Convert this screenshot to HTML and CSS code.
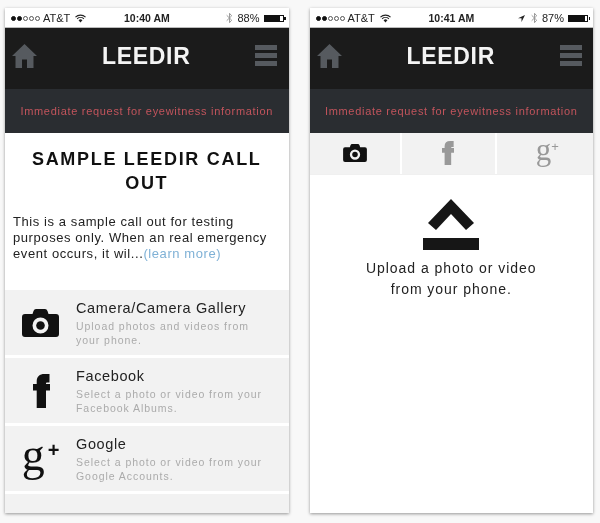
FILE: index.html
```html
<!DOCTYPE html>
<html lang="en">
<head>
    <meta charset="UTF-8">
    <meta name="viewport" content="width=device-width, initial-scale=1.0">
    <title>Leedir</title>
    <link rel="stylesheet" href="styles.css">
</head>
<body>
    <svg class="defs" width="0" height="0">
        <symbol id="wifi" viewBox="0 0 12 9">
            <path d="M0.5 3 A8 8 0 0 1 11.5 3 M2.3 4.9 A5.4 5.4 0 0 1 9.7 4.9" fill="none" stroke="currentColor" stroke-width="1.2"/>
            <path d="M3.9 6.4 A3 3 0 0 1 8.1 6.4 L6 8.8 Z" fill="currentColor"/>
        </symbol>
        <symbol id="bt" viewBox="0 0 6 11">
            <path d="M0.4 3 L5 7.5 L3 9.8 V1.2 L5 3.5 L0.4 8" fill="none" stroke="currentColor" stroke-width="0.9"/>
        </symbol>
        <symbol id="home" viewBox="0 0 25 24">
            <path d="M12.5 0 L25 12 H21.5 V24 H15 V15.5 H10 V24 H3.5 V12 H0 Z" fill="currentColor"/>
        </symbol>
        <symbol id="camera" viewBox="0 0 37 28">
            <path fill-rule="evenodd" fill="currentColor" d="M3 5 H10.5 L11.5 2 Q12.2 0 14 0 H23 Q24.8 0 25.5 2 L26.5 5 H34 Q37 5 37 8 V25 Q37 28 34 28 H3 Q0 28 0 25 V8 Q0 5 3 5 Z M18.5 8.5 A8 8 0 1 0 18.5 24.5 A8 8 0 1 0 18.5 8.5 Z"/>
            <circle cx="18.5" cy="16.5" r="4.3" fill="currentColor"/>
        </symbol>
        <symbol id="fb" viewBox="0 0 17 34">
            <path d="M3.7 34 V16.5 H0 V10 H3.7 V7.5 C3.7 2.5 6.5 0 11.5 0 H16.5 V8.5 H14.5 C13.3 8.5 13 9 13 9.5 V10 H17 V16.5 H13 V34 Z" fill="currentColor"/>
        </symbol>
    </svg>

    <div class="phone">
        <div class="status">
            <span class="signal"><i class="on"></i><i class="on"></i><i></i><i></i><i></i></span>
            <span class="carrier">AT&amp;T</span>
            <svg class="wifi"><use href="#wifi"/></svg>
            <span class="clock">10:40 AM</span>
            <span class="status-right">
                <svg class="bt"><use href="#bt"/></svg>
                <span class="pct">88%</span>
                <span class="battery"><b class="w88"></b></span>
            </span>
        </div>
        <div class="navbar">
            <svg class="home"><use href="#home"/></svg>
            <div class="brand">LEEDIR</div>
            <div class="burger"><span></span><span></span><span></span></div>
        </div>
        <div class="banner">Immediate request for eyewitness information</div>
        <div class="callout">
            <h1>SAMPLE LEEDIR CALL OUT</h1>
            <p>This is a sample call out for testing purposes only. When an real emergency event occurs, it wil...<a href="#">(learn more)</a></p>
        </div>
        <ul class="sources">
            <li>
                <div class="src-icon"><svg class="ic-camera"><use href="#camera"/></svg></div>
                <div class="src-text">
                    <h3>Camera/Camera Gallery</h3>
                    <p>Upload photos and videos from your phone.</p>
                </div>
            </li>
            <li>
                <div class="src-icon"><svg class="ic-fb"><use href="#fb"/></svg></div>
                <div class="src-text">
                    <h3>Facebook</h3>
                    <p>Select a photo or video from your Facebook Albums.</p>
                </div>
            </li>
            <li>
                <div class="src-icon"><span class="gplus"><span class="g">g</span><span class="plus">+</span></span></div>
                <div class="src-text">
                    <h3>Google</h3>
                    <p>Select a photo or video from your Google Accounts.</p>
                </div>
            </li>
            <li class="filler"></li>
        </ul>
    </div>

    <div class="phone">
        <div class="status">
            <span class="signal"><i class="on"></i><i class="on"></i><i></i><i></i><i></i></span>
            <span class="carrier">AT&amp;T</span>
            <svg class="wifi"><use href="#wifi"/></svg>
            <span class="clock">10:41 AM</span>
            <span class="status-right">
                <svg class="arrow" viewBox="0 0 8 8"><path d="M8 0 L0 3.6 H4 V8 Z" fill="currentColor"/></svg>
                <svg class="bt"><use href="#bt"/></svg>
                <span class="pct">87%</span>
                <span class="battery"><b class="w87"></b></span>
            </span>
        </div>
        <div class="navbar">
            <svg class="home"><use href="#home"/></svg>
            <div class="brand">LEEDIR</div>
            <div class="burger"><span></span><span></span><span></span></div>
        </div>
        <div class="banner">Immediate request for eyewitness information</div>
        <div class="tabs">
            <div class="tab active"><svg class="tab-camera"><use href="#camera"/></svg></div>
            <div class="tab"><svg class="tab-fb"><use href="#fb"/></svg></div>
            <div class="tab"><span class="gplus small"><span class="g">g</span><span class="plus">+</span></span></div>
        </div>
        <div class="upload">
            <svg class="upload-icon" viewBox="0 0 56 51">
                <polygon points="28,0 51,24 43,31 28,15 13,31 5,24" fill="currentColor"/>
                <rect x="0" y="39" width="56" height="12" fill="currentColor"/>
            </svg>
            <p>Upload a photo or video<br>from your phone.</p>
        </div>
    </div>
</body>
</html>
```

FILE: styles.css
```css
* {
    box-sizing: border-box;
}
html, body {
    height: 100%;
}
body {
    margin: 0;
    padding: 8px 7px 10px 5px;
    display: flex;
    gap: 21px;
    background-color: #f8f8f8;
    font-family: "Liberation Sans", Arial, sans-serif;
    overflow: hidden;
}
.defs {
    display: none;
}
.phone {
    width: 284px;
    height: 505px;
    display: flex;
    flex-direction: column;
    background-color: #fff;
    box-shadow: 0 1px 3px rgba(0, 0, 0, 0.4);
    filter: blur(0.35px);
}

/* status bar */
.status {
    height: 19px;
    display: flex;
    align-items: center;
    padding: 1px 5px 0 6px;
    color: #222;
    font-size: 11px;
    position: relative;
}
.signal {
    display: flex;
    gap: 1px;
    margin-right: 3px;
}
.signal i {
    width: 5px;
    height: 5px;
    border: 0.7px solid #555;
    border-radius: 50%;
}
.signal i.on {
    background-color: #111;
    border-color: #111;
}
.wifi {
    width: 11px;
    height: 9px;
    margin-left: 5px;
}
.clock {
    position: absolute;
    left: 119px;
    font-weight: bold;
    font-size: 10.5px;
}
.status-right {
    margin-left: auto;
    display: flex;
    align-items: center;
}
.arrow {
    width: 7px;
    height: 7px;
    margin-right: 6px;
}
.bt {
    width: 7px;
    height: 12px;
    color: #999;
    margin-right: 4px;
}
.battery {
    width: 20px;
    height: 7px;
    margin-left: 4px;
    border: 1px solid #111;
    position: relative;
}
.battery::after {
    content: "";
    position: absolute;
    right: -3px;
    top: 1px;
    width: 1.5px;
    height: 3px;
    background-color: #111;
}
.battery b {
    display: block;
    height: 100%;
    background-color: #111;
}
.w88 {
    width: 88%;
}
.w87 {
    width: 87%;
}

/* header */
.navbar {
    height: 62px;
    display: flex;
    align-items: center;
    justify-content: space-between;
    padding: 0 11px 6px 7px;
    background-color: #1b1b1b;
    border-top: 1px solid #bbb;
}
.home {
    width: 25px;
    height: 24px;
    color: #565a5f;
}
.brand {
    margin-top: 2px;
    color: #f4f4f4;
    font-size: 23px;
    font-weight: bold;
    letter-spacing: 0.7px;
}
.burger {
    width: 22px;
    display: flex;
    flex-direction: column;
    gap: 3px;
}
.burger span {
    height: 5px;
    background-color: #565a5f;
}
.banner {
    height: 44px;
    display: flex;
    align-items: center;
    justify-content: center;
    background-color: #2a2d31;
    color: #c2545c;
    font-size: 11px;
    letter-spacing: 0.7px;
}

/* left screen */
.callout {
    height: 157px;
    padding: 14px 8px 0;
}
.callout h1 {
    margin: 0 0 19px;
    text-align: center;
    color: #111;
    font-size: 18px;
    line-height: 24px;
    letter-spacing: 1.7px;
}
.callout p {
    margin: 0;
    color: #222;
    font-size: 13px;
    line-height: 16px;
    letter-spacing: 0.58px;
}
.callout a {
    color: #7fb1d6;
    text-decoration: none;
}
.sources {
    list-style: none;
    margin: 0;
    padding: 0;
    flex: 1;
    display: flex;
    flex-direction: column;
    gap: 3px;
}
.sources li {
    height: 65px;
    display: flex;
    background-color: #f2f2f2;
}
.sources li.filler {
    flex: 1;
    height: auto;
}
.src-icon {
    width: 71px;
    flex: none;
    display: flex;
    align-items: center;
    justify-content: center;
    color: #111;
}
.ic-camera {
    width: 37px;
    height: 28px;
}
.ic-fb {
    width: 17px;
    height: 34px;
    margin-left: 1px;
}
.src-text {
    padding-top: 10px;
    max-width: 192px;
}
.src-text h3 {
    margin: 0 0 3px;
    color: #222;
    font-size: 14.5px;
    font-weight: normal;
    line-height: 17px;
    letter-spacing: 0.62px;
}
.src-text p {
    margin: 0;
    color: #ababab;
    font-size: 10.5px;
    line-height: 13.5px;
    letter-spacing: 0.95px;
}
.gplus {
    display: flex;
    align-items: flex-start;
    gap: 3px;
    height: 38px;
    color: #111;
    font-family: "Liberation Serif", serif;
    font-size: 46px;
    line-height: 30px;
}
.plus {
    font-family: "Liberation Sans", sans-serif;
    font-size: 20px;
    font-weight: bold;
    line-height: 20px;
}

/* right screen */
.tabs {
    height: 42px;
    display: grid;
    grid-template-columns: 90px 93px 1fr;
    gap: 2px;
    border-bottom: 1px solid #f0f0f0;
}
.tab {
    display: flex;
    align-items: center;
    justify-content: center;
    background-color: #f2f2f2;
    color: #999;
    padding-bottom: 2px;
}
.tab.active {
    color: #111;
}
.tab-camera {
    width: 24px;
    height: 18px;
}
.tab-fb {
    width: 12px;
    height: 24px;
}
.gplus.small {
    gap: 0;
    height: 26px;
    margin-left: 5px;
    color: #999;
    font-size: 31px;
    line-height: 20px;
}
.gplus.small .plus {
    font-size: 13px;
    font-weight: normal;
    line-height: 14px;
}
.upload {
    padding-top: 24px;
    text-align: center;
}
.upload-icon {
    display: block;
    width: 56px;
    height: 51px;
    margin: 0 auto;
    color: #161616;
}
.upload p {
    margin: 8px 0 0;
    color: #222;
    font-size: 14px;
    line-height: 21px;
    letter-spacing: 0.95px;
}
```
